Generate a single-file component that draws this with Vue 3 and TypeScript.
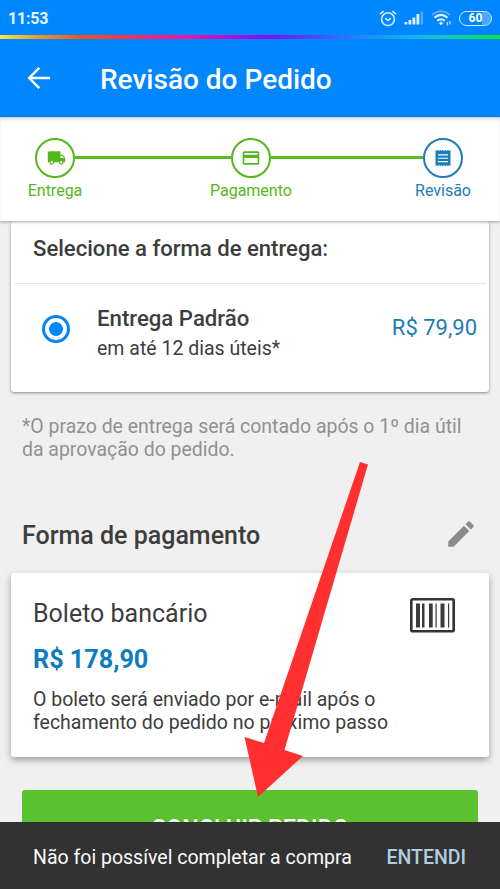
<script setup lang="ts">
interface Step {
  id: 'truck' | 'card' | 'receipt'
  label: string
  current: boolean
}

const steps: Step[] = [
  { id: 'truck', label: 'Entrega', current: false },
  { id: 'card', label: 'Pagamento', current: false },
  { id: 'receipt', label: 'Revisão', current: true },
]
</script>

<template>
  <div class="screen">
    <div class="status">
      <span class="clock">11:53</span>
      <div class="status-icons">
        <svg class="alarm" width="18" height="17" viewBox="0 0 18 17" fill="none" stroke="#d8ecff" stroke-width="1.6">
          <circle cx="9" cy="9.2" r="6.4" />
          <path d="M6.3 8.2 L9 10.5 L11.8 8.2M1 4.2 L4.6 1.2M17 4.2 L13.4 1.2" />
        </svg>
        <svg class="signal" width="20" height="14" viewBox="0 0 20 14" fill="#e2f1ff">
          <rect x="0.5" y="11" width="2.8" height="2.5" />
          <rect x="4.5" y="9" width="2.8" height="4.5" />
          <rect x="8.5" y="6.5" width="2.8" height="7" />
          <rect x="12.5" y="3" width="2.8" height="10.5" />
          <rect x="16.7" y="0.5" width="2.3" height="13" opacity="0.35" />
        </svg>
        <svg class="wifi" width="21" height="16" viewBox="0 0 21 16" fill="none" stroke="#e2f1ff" stroke-width="2">
          <path d="M1 5 Q10 -2.5 19 5" opacity="0.4" />
          <path d="M3.4 7.8 Q10 2 16.6 7.8M6.2 10.8 Q10 7.6 13.8 10.8" />
          <circle cx="10" cy="13.2" r="1.2" fill="#e2f1ff" stroke-width="1" />
          <path d="M16.4 12 V15.500M18.9 11 V14.500" stroke-width="1.3" opacity="0.8" />
        </svg>
        <span class="battery">60</span>
      </div>
    </div>
    <div class="rainbow"></div>

    <header class="bar">
      <svg width="24" height="24" viewBox="0 0 24 24" fill="none" stroke="#fff" stroke-width="2.4">
        <path d="M23 12 H2.5M12.3 1.8 L2.2 12 L12.3 22.2" />
      </svg>
      <h1>Revisão do Pedido</h1>
    </header>

    <nav class="stepper">
      <template v-for="(step, i) in steps" :key="step.id">
        <span v-if="i > 0" class="line"></span>
        <div class="step" :class="{ current: step.current }">
          <div class="ring">
            <svg v-if="step.id === 'truck'" class="truck" width="19" height="20" viewBox="0 0 24 24" preserveAspectRatio="none" fill="currentColor">
              <path d="M20 8h-3V4H3c-1.100 0-2 .9-2 2v11h2c0 1.660 1.340 3 3 3s3-1.340 3-3h6c0 1.660 1.340 3 3 3s3-1.340 3-3h2v-5l-3-4zM6 18.500c-.83 0-1.500-.67-1.500-1.500s.67-1.500 1.500-1.500 1.500.67 1.500 1.500-.67 1.500-1.500 1.500zm13.500-9l1.960 2.500H17V9.500h2.500zm-1.500 9c-.83 0-1.500-.67-1.500-1.500s.67-1.500 1.500-1.500 1.500.67 1.500 1.500-.67 1.500-1.500 1.500z" />
            </svg>
            <svg v-else-if="step.id === 'card'" width="20" height="20" viewBox="0 0 24 24" fill="currentColor">
              <path d="M20 4H4c-1.110 0-1.990.89-1.990 2L2 18c0 1.110.89 2 2 2h16c1.110 0 2-.89 2-2V6c0-1.110-.89-2-2-2zm0 14H4v-6h16v6zm0-10H4V6h16v2z" />
            </svg>
            <svg v-else width="20" height="20" viewBox="0 0 24 24" fill="currentColor">
              <path d="M18 17H6v-1.400h12v1.400zm0-4H6v-1.400h12v1.400zm0-4H6V7.600h12v1.400zM3 22l1.500-1.500L6 22l1.500-1.500L9 22l1.500-1.500L12 22l1.500-1.500L15 22l1.500-1.500L18 22l1.500-1.500L21 22V2l-1.500 1.500L18 2l-1.500 1.500L15 2l-1.500 1.500L12 2l-1.500 1.500L9 2 7.500 3.500 6 2 4.500 3.500 3 2v20z" />
            </svg>
          </div>
          <span class="label">{{ step.label }}</span>
        </div>
      </template>
    </nav>

    <main class="content">
      <section class="card delivery">
        <h2>Selecione a forma de entrega:</h2>
        <div class="option">
          <span class="radio"></span>
          <div class="option-text">
            <strong>Entrega Padrão</strong>
            <span>em até 12 dias úteis*</span>
          </div>
          <span class="price">R$ 79,90</span>
        </div>
      </section>

      <p class="note">*O prazo de entrega será contado após o 1º dia útil<br />da aprovação do pedido.</p>

      <div class="section-head">
        <h2>Forma de pagamento</h2>
        <svg width="34" height="34" viewBox="0 0 24 24" fill="#8b8b8b">
          <path d="M3 17.250V21h3.750L17.810 9.940l-3.750-3.750L3 17.250zM20.710 7.040c.39-.39.39-1.020 0-1.410l-2.340-2.340c-.39-.39-1.020-.39-1.410 0l-1.830 1.830 3.750 3.750 1.830-1.830z" />
        </svg>
      </div>

      <section class="card payment">
        <div class="method">
          <span>Boleto bancário</span>
          <svg width="45" height="36" viewBox="0 0 45 36" fill="#3b3b3b">
            <rect x="1.300" y="2.300" width="42.400" height="32" rx="1.500" fill="none" stroke="#333" stroke-width="2.600" />
            <rect x="6" y="6.500" width="4" height="24" />
            <rect x="12" y="6.500" width="2.500" height="24" />
            <rect x="19" y="6.500" width="3.700" height="24" />
            <rect x="25.500" y="6.500" width="1.200" height="24" />
            <rect x="30.500" y="6.500" width="4" height="24" />
            <rect x="38" y="6.500" width="1.200" height="24" />
          </svg>
        </div>
        <strong class="total">R$ 178,90</strong>
        <p>O boleto será enviado por e-mail após o<br />fechamento do pedido no próximo passo</p>
      </section>

      <button class="submit" type="button">CONCLUIR PEDIDO</button>
    </main>

    <svg class="pointer" width="60" height="337" viewBox="0 0 60 337">
      <path d="M116 0 L124 2.500 L40.500 288 L59 294 L14 335 L0.500 275 L20 281 Z" fill="#ff302f" />
    </svg>

    <div class="snackbar">
      <span>Não foi possível completar a compra</span>
      <b>ENTENDI</b>
    </div>
  </div>
</template>

<style>
body {
  margin: 0;
}
</style>

<style scoped>
.screen {
  position: relative;
  box-sizing: border-box;
  width: 500px;
  height: 889px;
  overflow: hidden;
  display: flex;
  flex-direction: column;
  background: #f0f0f0;
  color: #3d3d3d;
  font-family: Roboto, "Liberation Sans", sans-serif;
}
h1, h2, p {
  margin: 0;
}
svg {
  display: block;
  flex: none;
}
.status {
  flex: none;
  height: 35px;
  box-sizing: border-box;
  padding: 1px 8px 0;
  display: flex;
  align-items: center;
  justify-content: space-between;
  background: #0086ff;
}
.clock {
  font-size: 16px;
  font-weight: 700;
  letter-spacing: -0.2px;
  color: #e9f6ff;
}
.status-icons {
  display: flex;
  align-items: center;
}
.signal {
  margin-left: 7px;
}
.wifi {
  margin-left: 7px;
}
.battery {
  box-sizing: border-box;
  width: 33px;
  height: 15px;
  margin-left: 7px;
  border: 1.5px solid #d8ecff;
  border-radius: 8px;
  background: linear-gradient(90deg, transparent 70%, #4aa9ff 70%);
  background-clip: padding-box;
  color: #fff;
  font-size: 12px;
  font-weight: 700;
  line-height: 13px;
  text-align: center;
}
.rainbow {
  flex: none;
  height: 4px;
  background: linear-gradient(90deg, #f5e94a 0, #e8a030 7%, #ec5520 16%, #fb3340 24%, #f5169d 36%, #c30ccd 44%, #7a12f0 54%, #4d45f5 62%, #2384f5 72%, #12b5ee 83%, #14cf9a 92%, #14e23c 100%);
}
.bar {
  flex: none;
  height: 78px;
  box-sizing: border-box;
  padding-left: 27px;
  display: flex;
  align-items: center;
  gap: 49px;
  background: #0086ff;
  color: #fff;
}
.bar h1 {
  font-size: 28px;
  font-weight: 500;
  line-height: 34px;
  white-space: nowrap;
  padding-top: 3px;
}
.stepper {
  position: relative;
  z-index: 1;
  flex: none;
  height: 104px;
  box-sizing: border-box;
  padding: 21px 37px 0 35px;
  display: flex;
  align-items: flex-start;
  background: #fff;
  color: #54b81a;
  box-shadow: 0 1px 3px rgba(0, 0, 0, 0.35), inset 0 3px 3px -1px rgba(0, 0, 0, 0.18);
}
.step {
  flex: none;
  width: 40px;
  display: flex;
  flex-direction: column;
  align-items: center;
}
.step.current {
  color: #1c7db8;
}
.ring {
  box-sizing: border-box;
  width: 40px;
  height: 40px;
  border: 2px solid currentColor;
  border-radius: 50%;
  display: flex;
  align-items: center;
  justify-content: center;
}
.truck {
  margin-left: 2px;
}
.line {
  flex: 1;
  height: 3px;
  margin-top: 18px;
  background: #5bbb25;
}
.line:nth-of-type(1) {
  flex-grow: 1.025;
}
.label {
  margin-top: 3px;
  font-size: 16px;
  line-height: 20px;
  white-space: nowrap;
}
.content {
  flex: none;
  display: flex;
  flex-direction: column;
  padding: 0 11px;
}
.card {
  background: #fff;
  border-radius: 3px;
  box-shadow: 0 1px 3px rgba(0, 0, 0, 0.45);
}
.delivery {
  height: 171px;
}
.delivery h2 {
  box-sizing: border-box;
  height: 63px;
  margin: 0 3px;
  padding: 13px 19px 0;
  border-bottom: 1px solid #e6e6e6;
  font-size: 22.100px;
  font-weight: 500;
  line-height: 28px;
  white-space: nowrap;
}
.option {
  display: flex;
  align-items: flex-start;
  padding: 19px 12px 0 31px;
}
.radio {
  box-sizing: border-box;
  width: 28px;
  height: 28px;
  margin-top: 12px;
  border: 3px solid #0a84f0;
  border-radius: 50%;
  background: radial-gradient(circle, #0086ff 6.5px, transparent 7.200px);
}
.option-text {
  flex: 1;
  margin-left: 27px;
  display: flex;
  flex-direction: column;
  white-space: nowrap;
}
.option-text strong {
  font-size: 22.200px;
  font-weight: 500;
  line-height: 30px;
}
.option-text span {
  font-size: 19.500px;
  line-height: 32px;
}
.price {
  margin-top: 11px;
  font-size: 22px;
  line-height: 28px;
  color: #1c7db8;
}
.note {
  margin: 23px 0 0 11px;
  font-size: 19.450px;
  line-height: 23px;
  color: #919191;
  white-space: nowrap;
}
.section-head {
  height: 34px;
  margin: 56px 11px 22px;
  display: flex;
  align-items: center;
  justify-content: space-between;
}
.section-head h2 {
  padding-top: 3px;
  font-size: 25px;
  font-weight: 500;
  line-height: 32px;
}
.payment {
  height: 184px;
  box-sizing: border-box;
  padding: 24px 22px 0;
  box-shadow: 0 3px 7px rgba(0, 0, 0, 0.35);
}
.method {
  height: 36px;
  display: flex;
  justify-content: space-between;
  padding-right: 12px;
  font-size: 25px;
  line-height: 34px;
}
.total {
  display: block;
  margin-top: 11px;
  font-size: 25.200px;
  font-weight: 700;
  line-height: 32px;
  color: #0f7cc0;
}
.payment p {
  margin-top: 12px;
  font-size: 19.500px;
  line-height: 23px;
  white-space: nowrap;
}
.submit {
  height: 76px;
  margin: 33px 11px 0;
  padding: 0 0 1px;
  border: 0;
  border-radius: 3px;
  background: #5ac22e;
  color: #fff;
  font: 500 23.200px/28px Roboto, "Liberation Sans", sans-serif;
}
.pointer {
  position: absolute;
  left: 244px;
  top: 462px;
  overflow: visible;
  z-index: 2;
}
.snackbar {
  position: absolute;
  z-index: 3;
  left: 0;
  right: 0;
  bottom: 0;
  height: 67px;
  box-sizing: border-box;
  padding: 3px 34px 0 33px;
  display: flex;
  align-items: center;
  justify-content: space-between;
  background: #323232;
  color: #fafafa;
  font-size: 19.500px;
  white-space: nowrap;
}
.snackbar b {
  font-weight: 500;
  color: #b3cde0;
}
</style>
